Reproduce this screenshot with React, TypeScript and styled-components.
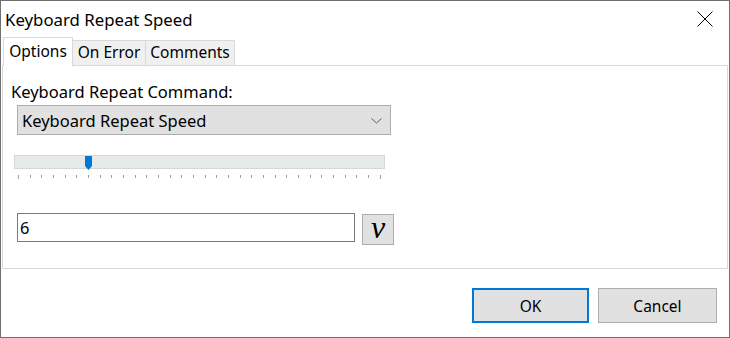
import styled, { createGlobalStyle } from "styled-components";

const GlobalStyle = createGlobalStyle`
  html, body {
    margin: 0;
    padding: 0;
    background: #ffffff;
  }
  * {
    box-sizing: border-box;
  }
`;

const TICK_COUNT = 32;
const VALUE = 6;

const App = () => {
  const ticks = Array.from({ length: TICK_COUNT }, (_, i) => i);
  // tick span inside the track: 4px inset at both ends
  const trackWidth = 371;
  const span = trackWidth - 2 - 8;
  const thumbLeft = 3 + (VALUE * span) / (TICK_COUNT - 1) - 3;

  return (
    <>
      <GlobalStyle />
      <Window>
        <TitleBar>
          <Title>Keyboard Repeat Speed</Title>
          <CloseIcon width="16" height="16" viewBox="0 0 16 16">
            <path d="M0.5 0.5 L15.5 15.5 M15.5 0.5 L0.5 15.5" stroke="#000" strokeWidth="1" fill="none" />
          </CloseIcon>
        </TitleBar>

        <TabStrip>
          <Tab active width={70}>Options</Tab>
          <Tab width={74}>On Error</Tab>
          <Tab width={90}>Comments</Tab>
        </TabStrip>

        <Panel>
          <FieldLabel>Keyboard Repeat Command:</FieldLabel>
          <Select>
            <span>Keyboard Repeat Speed</span>
            <svg width="11" height="6" viewBox="0 0 11 6">
              <polyline points="0.5,0.5 5.5,5 10.5,0.5" stroke="#606060" strokeWidth="1" fill="none" />
            </svg>
          </Select>

          <Slider>
            <Track>
              <Thumb style={{ left: thumbLeft }} width="7" height="14" viewBox="0 0 7 14">
                <path d="M0 0 H7 V10 L3.5 14 L0 10 Z" fill="#0078d7" />
              </Thumb>
            </Track>
            <Ticks>
              {ticks.map((t) => (
                <Tick key={t} end={t === 0 || t === TICK_COUNT - 1} />
              ))}
            </Ticks>
          </Slider>

          <ValueRow>
            <ValueInput>6</ValueInput>
            <VarButton>v</VarButton>
          </ValueRow>
        </Panel>

        <Footer>
          <DialogButton primary>OK</DialogButton>
          <DialogButton>Cancel</DialogButton>
        </Footer>
      </Window>
    </>
  );
};

const Window = styled.div`
  width: 730px;
  height: 338px;
  border: 1px solid #707070;
  background: #ffffff;
  display: flex;
  flex-direction: column;
  font-family: "Noto Sans", "Liberation Sans", sans-serif;
  color: #000000;
`;

const TitleBar = styled.div`
  height: 36px;
  display: flex;
  align-items: center;
  justify-content: space-between;
  padding: 0 16px 0 4px;
`;

const Title = styled.span`
  font-size: 16.8px;
`;

const CloseIcon = styled.svg`
  display: block;
  margin-top: -1px;
`;

const TabStrip = styled.div`
  display: flex;
  align-items: flex-end;
  height: 28px;
  padding-left: 2px;
`;

const Tab = styled.div<{ active?: boolean; width: number }>`
  position: relative;
  z-index: ${(props) => (props.active ? 1 : 0)};
  width: ${(props) => props.width}px;
  height: ${(props) => (props.active ? "29px" : "25px")};
  margin-bottom: ${(props) => (props.active ? "-1px" : "0")};
  margin-left: ${(props) => (props.active ? "0" : "-1px")};
  padding-top: ${(props) => (props.active ? "3px" : "1px")};
  background: ${(props) => (props.active ? "#ffffff" : "#f0f0f0")};
  border: 1px solid #d9d9d9;
  border-bottom: none;
  font-size: 15.5px;
  line-height: 21px;
  text-align: center;
  white-space: nowrap;

  &:first-child {
    margin-left: 0;
  }
`;

const Panel = styled.div`
  height: 204px;
  margin: 0 1px;
  border: 1px solid #d9d9d9;
  padding-top: 16px;
  display: flex;
  flex-direction: column;
  align-items: flex-start;
`;

const FieldLabel = styled.div`
  margin-left: 8px;
  font-size: 16.5px;
  line-height: 20px;
`;

const Select = styled.div`
  margin: 3px 0 0 14px;
  width: 374px;
  height: 30px;
  background: #e1e1e1;
  border: 1px solid #adadad;
  display: flex;
  align-items: center;
  justify-content: space-between;
  padding: 0 8px 0 4px;
  font-size: 16.5px;

  svg {
    display: block;
    margin-top: 1px;
  }
`;

const Slider = styled.div`
  margin: 20px 0 0 11px;
  width: 371px;
`;

const Track = styled.div`
  position: relative;
  height: 14px;
  background: #e7eaea;
  border: 1px solid #d6d6d6;
`;

const Thumb = styled.svg`
  position: absolute;
  top: 0;
  display: block;
`;

const Ticks = styled.div`
  margin-top: 6px;
  padding: 0 4px;
  display: flex;
  justify-content: space-between;
  align-items: flex-start;
`;

const Tick = styled.div<{ end?: boolean }>`
  width: 1px;
  height: ${(props) => (props.end ? "4px" : "3px")};
  background: #a0a0a0;
`;

const ValueRow = styled.div`
  margin: 34px 0 0 14px;
  display: flex;
  align-items: flex-start;
  gap: 7px;
`;

const ValueInput = styled.div`
  width: 338px;
  height: 29px;
  border: 1px solid #7a7a7a;
  background: #ffffff;
  padding-left: 2px;
  font-size: 16.5px;
  line-height: 27px;
`;

const VarButton = styled.div`
  margin-top: 1px;
  width: 32px;
  height: 31px;
  background: #e1e1e1;
  border: 1px solid #adadad;
  display: flex;
  align-items: center;
  justify-content: center;
  font-family: "Liberation Serif", "DejaVu Serif", serif;
  font-style: italic;
  font-size: 32px;
  line-height: 1;
  padding-bottom: 6px;
`;

const Footer = styled.div`
  display: flex;
  justify-content: flex-end;
  gap: 9px;
  padding: 19px 12px 0 0;
`;

const DialogButton = styled.div<{ primary?: boolean }>`
  width: ${(props) => (props.primary ? "117px" : "119px")};
  height: 35px;
  background: #e1e1e1;
  border: ${(props) => (props.primary ? "2px solid #0078d7" : "1px solid #adadad")};
  display: flex;
  align-items: center;
  justify-content: center;
  font-size: 15.5px;
`;

export default App;
